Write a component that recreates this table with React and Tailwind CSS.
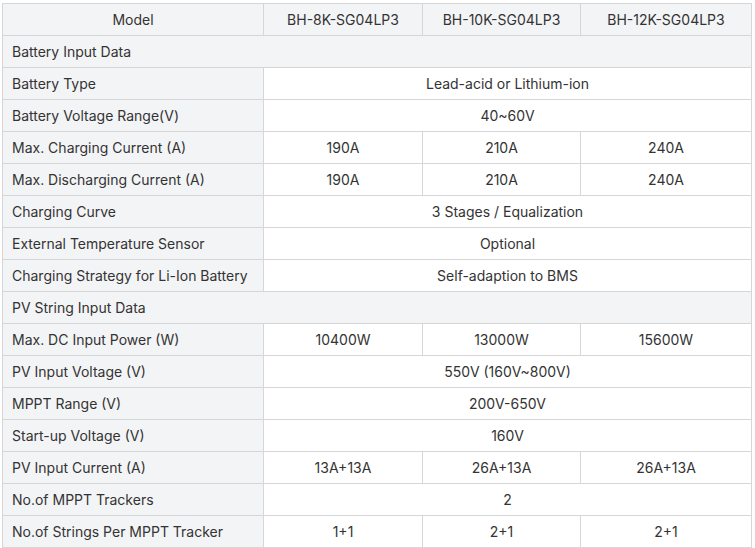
const models = ["BH-8K-SG04LP3", "BH-10K-SG04LP3", "BH-12K-SG04LP3"];

const rows = [
  { section: "Battery Input Data" },
  { label: "Battery Type", span: "Lead-acid or Lithium-ion" },
  { label: "Battery Voltage Range(V)", span: "40~60V" },
  { label: "Max. Charging Current (A)", values: ["190A", "210A", "240A"] },
  { label: "Max. Discharging Current (A)", values: ["190A", "210A", "240A"] },
  { label: "Charging Curve", span: "3 Stages / Equalization" },
  { label: "External Temperature Sensor", span: "Optional" },
  { label: "Charging Strategy for Li-Ion Battery", span: "Self-adaption to BMS" },
  { section: "PV String Input Data" },
  { label: "Max. DC Input Power (W)", values: ["10400W", "13000W", "15600W"] },
  { label: "PV Input Voltage (V)", span: "550V (160V~800V)" },
  { label: "MPPT Range (V)", span: "200V-650V" },
  { label: "Start-up Voltage (V)", span: "160V" },
  { label: "PV Input Current (A)", values: ["13A+13A", "26A+13A", "26A+13A"] },
  { label: "No.of MPPT Trackers", span: "2" },
  { label: "No.of Strings Per MPPT Tracker", values: ["1+1", "2+1", "2+1"] },
];

const cell = "border border-[#d6d6d6] h-8 p-0 align-middle";

export default function App() {
  return (
    <div className="bg-white pl-[2px] pt-[3px] w-[755px] h-[548px] font-['Inter',sans-serif] text-[14px] text-[#333]">
      <table className="table-fixed border-collapse w-[749px]">
        <colgroup>
          <col className="w-[261px]" />
          <col className="w-[159px]" />
          <col className="w-[158px]" />
          <col className="w-[171px]" />
        </colgroup>
        <thead>
          <tr className="bg-[#f3f4f6]">
            <th className={`${cell} font-normal text-center`}>Model</th>
            {models.map((m) => (
              <th key={m} className={`${cell} font-normal text-center`}>
                {m}
              </th>
            ))}
          </tr>
        </thead>
        <tbody>
          {rows.map((r, i) => {
            if (r.section) {
              return (
                <tr key={i} className="bg-[#f3f4f6]">
                  <td colSpan={4} className={`${cell} px-[9px]`}>
                    {r.section}
                  </td>
                </tr>
              );
            }
            return (
              <tr key={i}>
                <td className={`${cell} px-[9px] bg-[#f3f4f6]`}>{r.label}</td>
                {r.span ? (
                  <td colSpan={3} className={`${cell} text-center`}>
                    {r.span}
                  </td>
                ) : (
                  r.values.map((v, j) => (
                    <td key={j} className={`${cell} text-center`}>
                      {v}
                    </td>
                  ))
                )}
              </tr>
            );
          })}
        </tbody>
      </table>
    </div>
  );
}
